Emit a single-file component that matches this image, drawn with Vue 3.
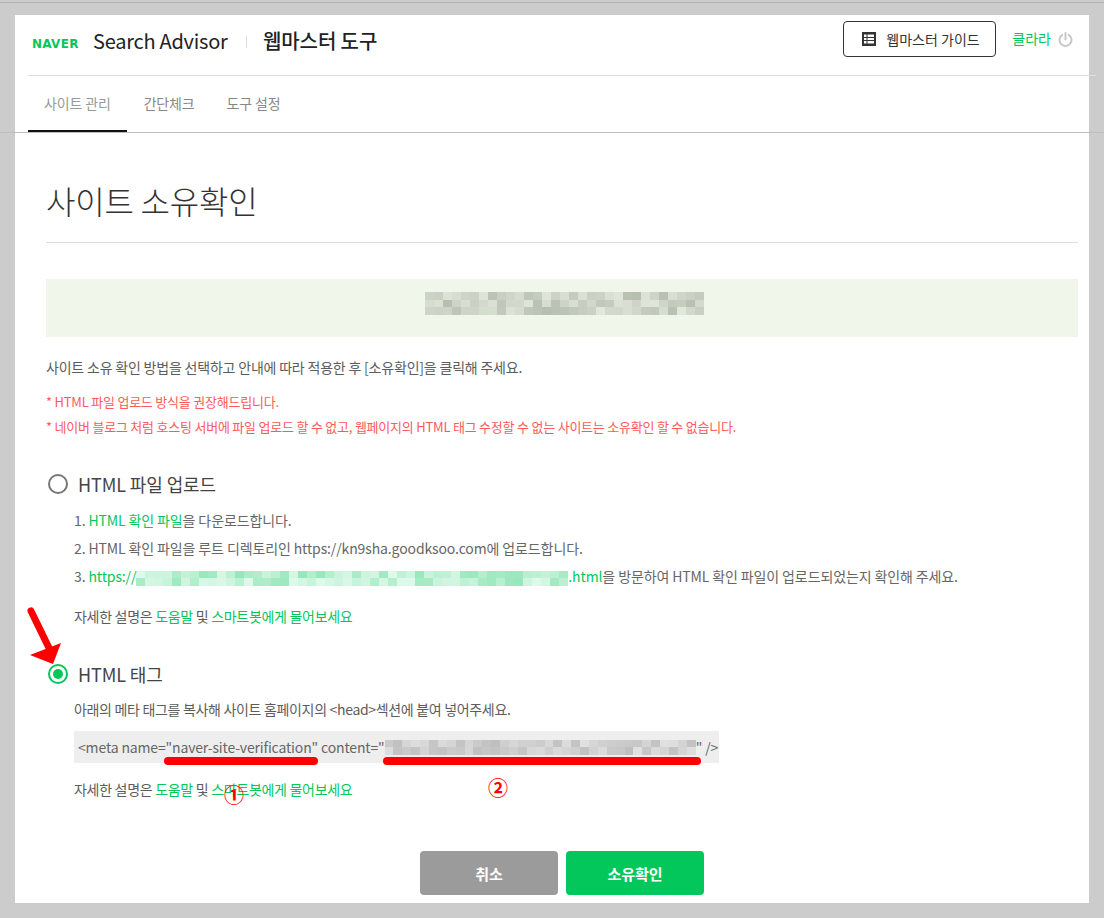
<script setup>
function cells(cols, rows, rgb, seed, lo, hi) {
  const out = []
  let s = seed
  for (let i = 0; i < cols * rows; i++) {
    s = (s * 9301 + 49297) % 233280
    const a = lo + (hi - lo) * (s / 233280)
    out.push(`rgba(${rgb},${a.toFixed(2)})`)
  }
  return out
}
const blurs = {
  site: { cols: 31, rows: 3, size: 9, list: cells(31, 3, '120,130,115', 7, 0.12, 0.48) },
  url: { cols: 48, rows: 2, size: 9, list: cells(48, 2, '3,199,90', 21, 0.12, 0.42) },
  code: { cols: 35, rows: 2, size: 8.9, list: cells(35, 2, '130,130,130', 11, 0.12, 0.45) }
}
const gridStyle = (b) => ({ gridTemplateColumns: `repeat(${b.cols}, ${b.size}px)`, gridAutoRows: '7.5px' })
</script>

<template>
  <div class="page">
    <div class="top-line"></div>
    <div class="card">
      <header class="head">
        <div class="brand">
          <span class="naver">NAVER</span>
          <span class="advisor">Search Advisor</span>
          <span class="sep"></span>
          <span class="tool">웹마스터 도구</span>
        </div>
        <div class="head-right">
          <button class="guide" type="button">
            <svg width="14" height="14" viewBox="0 0 14 14">
              <rect width="14" height="14" fill="#333" />
              <rect x="2" y="2.5" width="2.5" height="2.5" fill="#fff" />
              <rect x="2" y="6" width="2.5" height="2" fill="#fff" />
              <rect x="2" y="9" width="2.5" height="2.5" fill="#fff" />
              <rect x="5.5" y="2.5" width="6.5" height="2.5" fill="#fff" />
              <rect x="5.5" y="6" width="6.5" height="2" fill="#fff" />
              <rect x="5.5" y="9" width="6.5" height="2.5" fill="#fff" />
            </svg>
            <span>웹마스터 가이드</span>
          </button>
          <span class="user">클라라</span>
          <svg class="power" width="15" height="15" viewBox="0 0 15 15" fill="none" stroke="#c8c8c8" stroke-width="2" stroke-linecap="round">
            <path d="M4.3 2.9a6 6 0 1 0 6.4 0" />
            <path d="M7.5 1v6.4" />
          </svg>
        </div>
      </header>

      <nav class="tabs">
        <a class="tab active">사이트 관리</a>
        <a class="tab">간단체크</a>
        <a class="tab">도구 설정</a>
      </nav>

      <main class="content">
        <h1 class="title">사이트 소유확인</h1>

        <div class="banner">
          <div class="blur" :style="gridStyle(blurs.site)">
            <i v-for="(c, i) in blurs.site.list" :key="i" :style="{ background: c }"></i>
          </div>
        </div>

        <p class="intro">사이트 소유 확인 방법을 선택하고 안내에 따라 적용한 후 [소유확인]을 클릭해 주세요.</p>
        <p class="warn first">* HTML 파일 업로드 방식을 권장해드립니다.</p>
        <p class="warn">* 네이버 블로그 처럼 호스팅 서버에 파일 업로드 할 수 없고, 웹페이지의 HTML 태그 수정할 수 없는 사이트는 소유확인 할 수 없습니다.</p>

        <section class="option one">
          <div class="opt-head">
            <span class="radio"></span>
            <span class="opt-label">HTML 파일 업로드</span>
          </div>
          <ol class="steps">
            <li>1. <b>HTML 확인 파일</b>을 다운로드합니다.</li>
            <li>2. HTML 확인 파일을 루트 디렉토리인 https://kn9sha.goodksoo.com에 업로드합니다.</li>
            <li>3. <b>https://</b><span class="blur inline" :style="gridStyle(blurs.url)"><i v-for="(c, i) in blurs.url.list" :key="i" :style="{ background: c }"></i></span><b>.html</b>을 방문하여 HTML 확인 파일이 업로드되었는지 확인해 주세요.</li>
          </ol>
          <p class="help">자세한 설명은 <b>도움말</b> 및 <b>스마트봇에게 물어보세요</b></p>
        </section>

        <section class="option two">
          <div class="opt-head">
            <span class="radio on"></span>
            <span class="opt-label">HTML 태그</span>
          </div>
          <p class="desc">아래의 메타 태그를 복사해 사이트 홈페이지의 &lt;head&gt;섹션에 붙여 넣어주세요.</p>
          <div class="code">
            <span>&lt;meta name="naver-site-verification" content="</span>
            <span class="blur" :style="gridStyle(blurs.code)"><i v-for="(c, i) in blurs.code.list" :key="i" :style="{ background: c }"></i></span>
            <span>" /&gt;</span>
          </div>
          <p class="help">자세한 설명은 <b>도움말</b> 및 <b>스마트봇에게 물어보세요</b></p>
        </section>

        <div class="actions">
          <button class="btn gray" type="button">취소</button>
          <button class="btn green" type="button">소유확인</button>
        </div>
      </main>
    </div>

    <div class="wide-line"></div>
    <svg class="arrow" width="40" height="65" viewBox="0 0 40 65">
      <path d="M5 5 L24 44" stroke="#f00" stroke-width="7" stroke-linecap="round" fill="none" />
      <path d="M4 49 L35 37 L27 58 Z" fill="#f00" />
    </svg>
    <span class="mark m1"></span>
    <span class="mark m2"></span>
    <span class="num n1">①</span>
    <span class="num n2">②</span>
  </div>
</template>

<style>
html, body { margin: 0; background: #ccc; }
</style>

<style scoped>
.page {
  position: relative;
  width: 1104px;
  height: 918px;
  overflow: hidden;
  background: #ccc;
  padding-top: 15px;
  box-sizing: border-box;
  font-family: "Noto Sans CJK KR", "Noto Sans", sans-serif;
  color: #555;
}
.top-line { position: absolute; left: 0; right: 0; top: 2px; height: 1px; background: #b4b4b4; }
.wide-line { position: absolute; left: 0; right: 0; top: 132px; height: 1px; background: #bdbdbd; }
.card { margin-left: 15px; width: 1074px; height: 888px; background: #fff; }
.head {
  height: 60px;
  margin: 0 -7px 0 13px;
  border-bottom: 1px solid #ddd;
  display: flex;
  justify-content: space-between;
}
.brand { display: flex; align-items: center; padding: 0 0 9px 4px; }
.naver { font-family: "DejaVu Sans", sans-serif; font-weight: 700; font-size: 12px; color: #03c75a; width: 61px; padding-top: 6px; letter-spacing: .3px; }
.advisor { font-size: 20px; color: #222; letter-spacing: -.25px; width: 136px; white-space: nowrap; }
.sep { width: 1px; height: 12px; background: #ddd; margin: 2px 16px 0 17px; }
.tool { font-size: 20px; font-weight: 500; color: #222; letter-spacing: -.1px; white-space: nowrap; }
.head-right { display: flex; align-items: flex-start; padding: 6px 23px 0 0; }
.guide {
  width: 153px;
  height: 36px;
  padding: 0 0 0 18px;
  display: flex;
  align-items: center;
  gap: 10px;
  background: #fff;
  border: 1px solid #333;
  border-radius: 4px;
  font: 14px "Noto Sans CJK KR", sans-serif;
  color: #333;
  box-sizing: border-box;
  white-space: nowrap;
}
.user { font-size: 14px; color: #03c75a; margin: 7px 0 0 16px; line-height: 20px; }
.power { margin: 11px 0 0 7px; }
.tabs { display: flex; height: 56px; margin-left: 13px; }
.tab {
  padding: 0 16px;
  font-size: 14px;
  line-height: 54px;
  color: #888;
  letter-spacing: -.15px;
  height: 56px;
  box-sizing: border-box;
}
.tab.active { color: #999; border-bottom: 2px solid #111; margin-right: 1px; }
.content { padding: 0 11px 0 31px; }
.title {
  margin: 0 0 36px;
  height: 111px;
  line-height: 136px;
  box-sizing: border-box;
  border-bottom: 1px solid #ddd;
  font-size: 32px;
  font-weight: 300;
  color: #333;
  letter-spacing: -.2px;
}
.banner { height: 58px; background: #f0f6e9; display: flex; align-items: center; justify-content: center; padding: 0 0 9px 5px; box-sizing: border-box; }
.blur { display: inline-grid; }
.blur i { display: block; }
.blur.inline { vertical-align: middle; width: 432px; overflow: hidden; }
.intro { margin: 21px 0 0; font-size: 14px; line-height: 19px; letter-spacing: -.2px; color: #5c5c5c; }
.warn { margin: 6px 0 0; font-size: 13px; line-height: 19px; color: #ff5a5a; letter-spacing: -.22px; }
.warn.first { margin-top: 15px; }
.option { padding-left: 2px; }
.one { margin-top: 36px; }
.two { margin-top: 36px; }
.opt-head { display: flex; align-items: center; gap: 10px; height: 24px; }
.radio { width: 20px; height: 20px; border: 2px solid #777; border-radius: 50%; box-sizing: border-box; background: #fff; }
.radio.on { border: 2px solid #03c75a; position: relative; }
.radio.on::after { content: ""; position: absolute; inset: 3px; border-radius: 50%; background: #03c75a; }
.opt-label { font-size: 18px; color: #444; letter-spacing: -.1px; line-height: 24px; }
.steps { list-style: none; margin: 10px 0 0; padding: 0 0 0 26px; }
.steps li { height: 28px; line-height: 28px; font-size: 14px; letter-spacing: -.12px; color: #666; white-space: nowrap; }
b { font-weight: 400; color: #03c75a; }
.help { margin: 0; padding-left: 26px; font-size: 14px; line-height: 20px; letter-spacing: -.3px; color: #5c5c5c; }
.steps + .help { margin-top: 16px; }
.desc { margin: 13px 0 0; padding-left: 26px; font-size: 14px; line-height: 20px; letter-spacing: -.32px; color: #5c5c5c; }
.code {
  margin: 12px 0 16px 26px;
  width: 645px;
  height: 32px;
  background: #eee;
  display: flex;
  align-items: center;
  padding-left: 4px;
  box-sizing: border-box;
  font-size: 14px;
  letter-spacing: -.15px;
  color: #666;
  white-space: pre;
}
.actions { display: flex; justify-content: center; gap: 8px; margin: 52px 0 0; }
.btn {
  width: 138px;
  height: 44px;
  border: 0;
  border-radius: 4px;
  color: #fff;
  font: 700 15px "Noto Sans CJK KR", sans-serif;
}
.gray { background: #9b9b9b; }
.green { background: #03c75a; }
.arrow { position: absolute; left: 26px; top: 606px; }
.mark { position: absolute; height: 8px; top: 757px; background: #f00; border-radius: 4px; }
.m1 { left: 164px; width: 154px; }
.m2 { left: 383px; width: 318px; }
.num { position: absolute; color: #f00; font-size: 20px; font-weight: 700; line-height: 24px; }
.n1 { left: 224px; top: 783px; }
.n2 { left: 488px; top: 776px; }
</style>
